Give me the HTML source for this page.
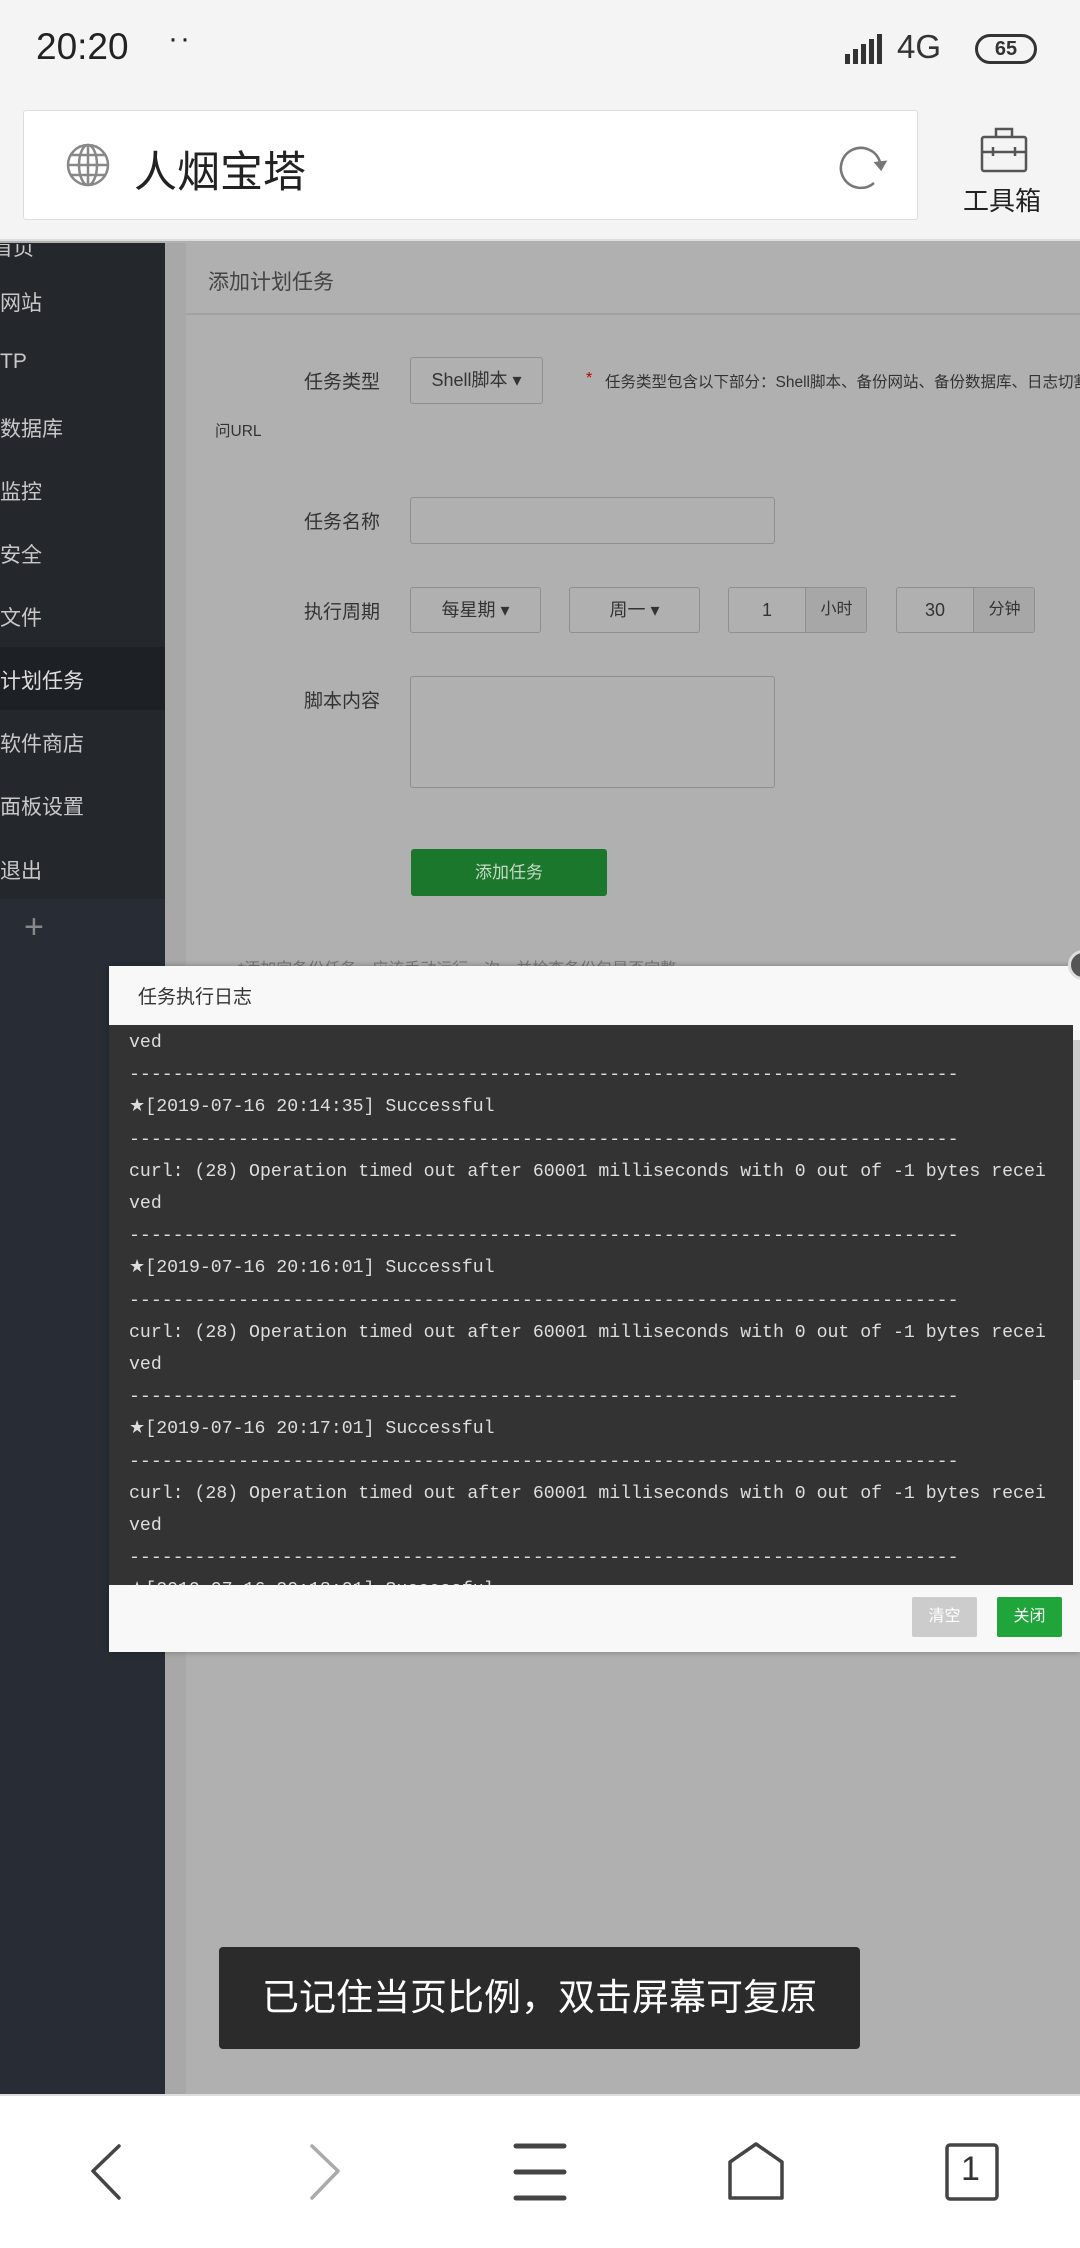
<!DOCTYPE html>
<html><head><meta charset="utf-8"><style>
*{margin:0;padding:0;box-sizing:border-box}
body{width:1080px;height:2248px;position:relative;overflow:hidden;background:#b0b0b0;font-family:"Liberation Sans","Noto Sans CJK SC",sans-serif}
.a{position:absolute}
.nav{left:0;font-size:21px;color:#c8c8c8;white-space:nowrap}
.lbl{font-size:19px;color:#333}
.box{border:1px solid #8f8f8f;border-radius:3px;background:#b0b0b0}
.sel{font-size:18px;color:#333;text-align:center}
.log{font-family:"Liberation Mono",monospace;font-size:18.2px;color:#ddd;line-height:32.2px;white-space:pre}
</style></head><body>
<div class="a" style="left:0;top:0;width:1080px;height:241px;background:#f4f4f4;border-bottom:2px solid #ddd"></div>
<div class="a" style="left:36px;top:26px;font-size:37px;color:#222">20:20</div>
<div class="a" style="left:168px;top:22px;font-size:30px;color:#222;letter-spacing:2px">··</div>
<svg class="a" style="left:845px;top:34px" width="40" height="30"><g fill="#333"><rect x="0" y="20" width="5" height="10"/><rect x="8" y="15" width="5" height="15"/><rect x="16" y="10" width="5" height="20"/><rect x="24" y="5" width="5" height="25"/><rect x="32" y="0" width="5" height="30"/></g></svg>
<div class="a" style="left:897px;top:28px;font-size:33px;color:#333">4G</div>
<div class="a" style="left:975px;top:34px;width:62px;height:30px;border:3px solid #333;border-radius:15px;font-size:20px;font-weight:bold;text-align:center;line-height:24px;color:#333">65</div>
<div class="a" style="left:23px;top:110px;width:895px;height:110px;background:#fff;border:1px solid #ddd;border-radius:3px"></div>
<svg class="a" style="left:66px;top:143px" width="44" height="44" viewBox="0 0 44 44" fill="none" stroke="#888" stroke-width="2.5"><circle cx="22" cy="22" r="20"/><ellipse cx="22" cy="22" rx="9" ry="20"/><line x1="22" y1="2" x2="22" y2="42"/><line x1="2" y1="22" x2="42" y2="22"/><line x1="5" y1="12" x2="39" y2="12"/><line x1="5" y1="32" x2="39" y2="32"/></svg>
<div class="a" style="left:134px;top:138px;font-size:43px;color:#222">人烟宝塔</div>
<svg class="a" style="left:836px;top:140px" width="54" height="54" viewBox="0 0 54 54" fill="none" stroke="#777" stroke-width="2.5"><path d="M44 22 A20 20 0 1 0 38 43"/><path d="M40 23 l5 6 l4-7z" fill="#777"/></svg>
<svg class="a" style="left:980px;top:125px" width="48" height="50" viewBox="0 0 48 50" fill="none" stroke="#555" stroke-width="2.5"><rect x="2" y="12" width="44" height="34" rx="2"/><path d="M16 12V4h16v8"/><line x1="2" y1="27" x2="46" y2="27"/><line x1="13" y1="22" x2="13" y2="31"/><line x1="35" y1="22" x2="35" y2="31"/></svg>
<div class="a" style="left:963px;top:181px;font-size:26px;color:#222">工具箱</div>
<div class="a" style="left:0;top:243px;width:165px;height:656px;background:#24282d"></div>
<div class="a" style="left:0;top:899px;width:165px;height:1195px;background:#282d35"></div>
<div class="a" style="left:0;top:647px;width:165px;height:63px;background:#1d2024"></div>
<div class="a nav" style="top:232px;left:-8px;clip-path:inset(12px 0 0 0)">首页</div>
<div class="a nav" style="top:287px">网站</div>
<div class="a nav" style="top:350px">TP</div>
<div class="a nav" style="top:413px">数据库</div>
<div class="a nav" style="top:476px">监控</div>
<div class="a nav" style="top:539px">安全</div>
<div class="a nav" style="top:602px">文件</div>
<div class="a nav" style="top:665px;color:#ddd">计划任务</div>
<div class="a nav" style="top:728px">软件商店</div>
<div class="a nav" style="top:791px">面板设置</div>
<div class="a nav" style="top:855px">退出</div>
<div class="a" style="left:24px;top:908px;font-size:34px;color:#888">+</div>
<div class="a" style="left:165px;top:243px;width:21px;height:1851px;background:#a8a8a8"></div>
<div class="a" style="left:186px;top:313px;width:894px;height:2px;background:#a2a2a2"></div>
<div class="a" style="left:208px;top:266px;font-size:21px;color:#444">添加计划任务</div>
<div class="a lbl" style="left:304px;top:367px">任务类型</div>
<div class="a box sel" style="left:410px;top:357px;width:133px;height:47px;line-height:45px">Shell脚本 ▾</div>
<div class="a" style="left:586px;top:370px;font-size:16px;color:#b00">*</div>
<div class="a" style="left:605px;top:370px;font-size:15.5px;color:#333;white-space:nowrap">任务类型包含以下部分：Shell脚本、备份网站、备份数据库、日志切割、访</div>
<div class="a" style="left:215px;top:419px;font-size:15.5px;color:#333">问URL</div>
<div class="a lbl" style="left:304px;top:507px">任务名称</div>
<div class="a box" style="left:410px;top:497px;width:365px;height:47px"></div>
<div class="a lbl" style="left:304px;top:597px">执行周期</div>
<div class="a box sel" style="left:410px;top:587px;width:131px;height:46px;line-height:44px">每星期 ▾</div>
<div class="a box sel" style="left:569px;top:587px;width:131px;height:46px;line-height:44px">周一 ▾</div>
<div class="a box sel" style="left:728px;top:587px;width:139px;height:46px;line-height:44px;overflow:hidden"><span style="position:absolute;left:0;width:76px">1</span><span style="position:absolute;left:76px;width:62px;top:0;height:44px;background:#a7a7a7;border-left:1px solid #8f8f8f;font-size:16px">小时</span></div>
<div class="a box sel" style="left:896px;top:587px;width:139px;height:46px;line-height:44px;overflow:hidden"><span style="position:absolute;left:0;width:76px">30</span><span style="position:absolute;left:76px;width:62px;top:0;height:44px;background:#a7a7a7;border-left:1px solid #8f8f8f;font-size:16px">分钟</span></div>
<div class="a lbl" style="left:304px;top:686px">脚本内容</div>
<div class="a box" style="left:410px;top:676px;width:365px;height:112px"></div>
<div class="a" style="left:411px;top:849px;width:196px;height:47px;background:#1b772b;border-radius:3px;color:#c8d8c8;font-size:17px;text-align:center;line-height:47px">添加任务</div>
<div class="a" style="left:238px;top:955px;font-size:16px;color:#777;white-space:nowrap">*添加完备份任务，应该手动运行一次，并检查备份包是否完整</div>
<div class="a" style="left:109px;top:966px;width:971px;height:686px;background:#f8f8f8;box-shadow:0 0 6px rgba(0,0,0,.3)"></div>
<div class="a" style="left:1068px;top:950px;width:30px;height:30px;border-radius:50%;background:#555;border:3px solid #ddd"></div>
<div class="a" style="left:138px;top:982px;font-size:19px;color:#333">任务执行日志</div>
<div class="a" style="left:109px;top:1025px;width:964px;height:560px;background:#333;overflow:hidden">
<div class="log" style="position:absolute;left:20px;top:2px">ved
----------------------------------------------------------------------------
★[2019-07-16 20:14:35] Successful
----------------------------------------------------------------------------
curl: (28) Operation timed out after 60001 milliseconds with 0 out of -1 bytes recei
ved
----------------------------------------------------------------------------
★[2019-07-16 20:16:01] Successful
----------------------------------------------------------------------------
curl: (28) Operation timed out after 60001 milliseconds with 0 out of -1 bytes recei
ved
----------------------------------------------------------------------------
★[2019-07-16 20:17:01] Successful
----------------------------------------------------------------------------
curl: (28) Operation timed out after 60001 milliseconds with 0 out of -1 bytes recei
ved
----------------------------------------------------------------------------
★[2019-07-16 20:18:01] Successful</div>
</div>
<div class="a" style="left:1073px;top:1040px;width:7px;height:340px;background:#ccc"></div>
<div class="a" style="left:912px;top:1597px;width:65px;height:40px;background:#ccc;border-radius:2px;color:#fff;font-size:16px;text-align:center;line-height:40px">清空</div>
<div class="a" style="left:997px;top:1597px;width:65px;height:40px;background:#20a53a;border-radius:2px;color:#fff;font-size:16px;text-align:center;line-height:40px">关闭</div>
<div class="a" style="left:219px;top:1947px;width:641px;height:102px;background:#2b2b2b;border-radius:4px;color:#fff;font-size:37px;text-align:center;line-height:102px;white-space:nowrap">已记住当页比例，双击屏幕可复原</div>
<div class="a" style="left:0;top:2094px;width:1080px;height:154px;background:#fff;border-top:2px solid #ddd"></div>
<svg class="a" style="left:0;top:2140px" width="1080" height="70" fill="none" stroke-width="3.5" stroke-linecap="round" stroke-linejoin="round">
<path d="M119 6 L93 31 L119 58" stroke="#444"/>
<path d="M312 6 L338 31 L312 58" stroke="#aaa"/>
<g stroke="#444" stroke-width="5"><line x1="516" y1="6" x2="564" y2="6"/><line x1="516" y1="32" x2="564" y2="32"/><line x1="516" y1="58" x2="564" y2="58"/></g>
<path d="M730 58 V22 L756 4 L782 22 V58 Z" stroke="#444"/>
<rect x="947" y="5" width="50" height="54" rx="3" stroke="#444"/>
</svg>
<div class="a" style="left:961px;top:2150px;font-size:34px;color:#333">1</div>
</body></html>
